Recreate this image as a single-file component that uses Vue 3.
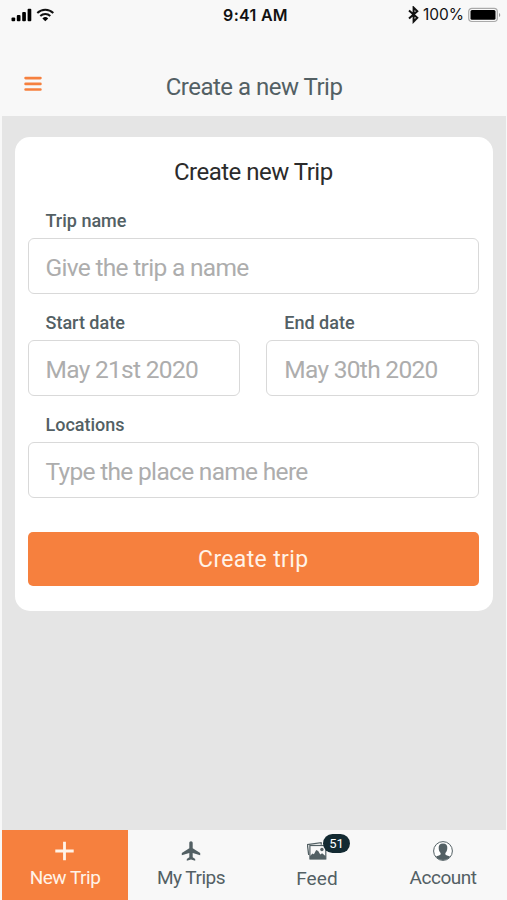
<script setup>
const fields = [
  { id: 'name', label: 'Trip name', hint: 'Give the trip a name', wide: true },
  { id: 'start', label: 'Start date', hint: 'May 21st 2020', wide: false },
  { id: 'end', label: 'End date', hint: 'May 30th 2020', wide: false },
  { id: 'places', label: 'Locations', hint: 'Type the place name here', wide: true },
]
</script>

<template>
  <div class="screen">
    <div class="status">
      <div class="signal">
        <svg width="46" height="16" viewBox="0 0 46 16">
          <rect x="1.5" y="10.5" width="3.7" height="3.8" rx="1" />
          <rect x="6.8" y="8" width="3.7" height="6.3" rx="1" />
          <rect x="12.2" y="5" width="3.7" height="9.3" rx="1" />
          <rect x="17.6" y="1.8" width="3.7" height="12.500" rx="1" />
          <g fill="none" stroke="#111" stroke-width="2">
            <path d="M27.3 6a11.500 11.500 0 0 1 16 0" />
            <path d="M30.3 9.100a7.300 7.300 0 0 1 10 0" />
          </g>
          <path d="M32.400 11.400a4.200 4.200 0 0 1 5.800 0l-2.900 2.900z" />
        </svg>
      </div>
      <span class="clock">9:41 AM</span>
      <div class="power">
        <svg width="11" height="18" viewBox="0 0 11 18">
          <path d="M1 4.600l8.300 7.200L5.600 15.600V1.600l3.700 3.600L1 12.400" fill="none" stroke="#111" stroke-width="2" />
        </svg>
        <span class="percent">100%</span>
        <svg width="33" height="16" viewBox="0 0 33 16">
          <rect x=".7" y="1.300" width="28.600" height="13.200" rx="3.200" fill="#f8f8f8" stroke="#aaa" stroke-width="1.200" />
          <rect x="2.500" y="3.100" width="25" height="9.600" rx="1.500" fill="#000" />
          <path d="M31 5.900a2.200 2.200 0 0 1 0 4z" fill="#999" />
        </svg>
      </div>
    </div>

    <header class="bar">
      <svg class="menu" width="18" height="16" viewBox="0 0 18 16">
        <path d="M1.600 2.100h14.800M1.600 7.900h14.800M1.600 13.500h14.800" stroke="#f6803e" stroke-width="2.700" stroke-linecap="round" />
      </svg>
      <h1>Create a new Trip</h1>
    </header>

    <main class="body">
      <section class="card">
        <h2>Create new Trip</h2>
        <div class="form">
          <div v-for="f in fields" :key="f.id" class="field" :class="{ wide: f.wide }">
            <div class="label">{{ f.label }}</div>
            <div class="input">{{ f.hint }}</div>
          </div>
        </div>
        <button class="submit">Create trip</button>
      </section>
    </main>

    <nav class="tabs">
      <a class="tab active">
        <svg width="20" height="20" viewBox="0 0 20 20">
          <path d="M9.500 .8v18.400M.3 10h18.400" stroke="#fff3e8" stroke-width="2.800" />
        </svg>
        <span>New Trip</span>
      </a>
      <a class="tab">
        <svg width="20" height="20" viewBox="0 0 20 20">
          <path d="M10 .3c-1 0-1.700.8-1.700 1.800v5.200L.8 12v2.200l7.500-2.200v4.300l-2.500 1.800v1.600l4.200-1.100 4.200 1.100v-1.600l-2.500-1.800v-4.300l7.500 2.200V12l-7.500-4.700V2.100c0-1-.7-1.800-1.700-1.800z" fill="#536064" />
        </svg>
        <span>My Trips</span>
      </a>
      <a class="tab feed">
        <div class="stack">
          <svg width="20" height="20" viewBox="0 0 20 20">
            <path d="M1.700 14L.4 3.600 14.100 1.700l.3 2" fill="none" stroke="#536064" stroke-width="1.300" />
            <rect x="2.900" y="4.500" width="15.900" height="13.400" fill="#f8f8f8" stroke="#536064" stroke-width="1.200" />
            <path d="M3 18.300v-3.400l2.500-2.400 1.400.7 2.300-4.300 2 1.200 2.100 3.400 1.800-1.200 3.700 3v3z" fill="#536064" />
            <circle cx="14.900" cy="8.500" r="1.700" fill="#536064" />
          </svg>
          <b class="badge">51</b>
        </div>
        <span>Feed</span>
      </a>
      <a class="tab">
        <svg width="22" height="20" viewBox="0 0 22 20">
          <circle cx="11" cy="10" r="9.400" fill="#fff" stroke="#536064" stroke-width="1" />
          <path d="M11 2.500c-3.100 0-4.600 1.800-4.300 4.500.1 2.400.8 3.900 1.900 4.900.2 1.200-.1 1.900-1.200 2.300-1.800.6-2.700.9-3.400 1.500A9 9 0 0 0 11 19a9 9 0 0 0 7-3.300c-.7-.6-1.600-.9-3.400-1.500-1.100-.4-1.400-1.100-1.200-2.300 1.100-1 1.800-2.500 1.900-4.900.3-2.700-1.200-4.500-4.300-4.500z" fill="#536064" />
        </svg>
        <span>Account</span>
      </a>
    </nav>
  </div>
</template>

<style>
body {
  margin: 0;
  background: #f8f8f8;
}
</style>

<style scoped>
.screen {
  box-sizing: border-box;
  width: 507px;
  height: 900px;
  padding: 0 1px 0 2px;
  display: flex;
  flex-direction: column;
  overflow: hidden;
  background: #f8f8f8;
  font-family: Roboto, sans-serif;
  color: #536064;
  white-space: nowrap;
}
.status {
  display: grid;
  grid-template-columns: 1fr auto 1fr;
  align-items: center;
  height: 29px;
  padding: 0 5px 0 8px;
  color: #111;
}
.signal,
.power {
  display: flex;
  align-items: center;
}
.power {
  justify-content: flex-end;
}
.clock {
  font: 600 16px/20px Inter, sans-serif;
  letter-spacing: 0.3px;
}
.percent {
  margin: 0 4px 0 4px;
  font: 400 15.500px/20px Inter, sans-serif;
}
.bar {
  display: grid;
  grid-template-columns: 18px 1fr 18px;
  align-items: start;
  height: 87px;
  box-sizing: border-box;
  padding: 44px 22px 0;
}
h1,
h2 {
  margin: 0;
  text-align: center;
  font-weight: 400;
  font-size: 24px;
  line-height: 28px;
  letter-spacing: -0.5px;
}
.menu {
  margin-top: 3px;
}
.body {
  flex: 1;
  padding: 20.500px 13.500px 0 12.500px;
  background: #e5e5e5;
}
.card {
  box-sizing: border-box;
  height: 474px;
  padding: 21px 13.500px 0 13px;
  border-radius: 15px;
  background: #fff;
}
h2 {
  color: #2b2b2b;
}
.form {
  display: grid;
  grid-template-columns: 1fr 1fr;
  column-gap: 26px;
  row-gap: 16px;
  margin-top: 22px;
}
.field.wide {
  grid-column: 1 / -1;
}
.label {
  height: 30px;
  padding-left: 18px;
  font-size: 18px;
  font-weight: 500;
  line-height: 26px;
}
.input {
  box-sizing: border-box;
  height: 56px;
  padding-left: 17px;
  border: 1px solid #d9d9d9;
  border-radius: 6px;
  color: #adadad;
  font-size: 24.500px;
  line-height: 57px;
  letter-spacing: -0.690px;
}
.submit {
  display: block;
  box-sizing: border-box;
  width: 100%;
  height: 54px;
  margin-top: 34px;
  padding: 3px 0 0;
  border: 0;
  border-radius: 5px;
  background: #f6803e;
  color: #fff3e8;
  font: 400 23px/50px Roboto, sans-serif;
  letter-spacing: 0.350px;
}
.tabs {
  display: grid;
  grid-template-columns: repeat(4, 1fr);
  height: 70px;
}
.tab {
  display: flex;
  flex-direction: column;
  align-items: center;
  padding-top: 11px;
  font-size: 19px;
  line-height: 24px;
  letter-spacing: -0.500px;
  gap: 5px;
}
.feed {
  gap: 6px;
  letter-spacing: 0.100px;
}
.active {
  background: #f6803e;
  color: #fff3e8;
}
.stack {
  position: relative;
  height: 20px;
}
.tab svg {
  display: block;
}
.badge {
  position: absolute;
  left: 16px;
  top: -7px;
  width: 27px;
  height: 19px;
  border-radius: 10px;
  background: #132a32;
  color: #fff;
  text-align: center;
  font-size: 13px;
  font-weight: 400;
  line-height: 19px;
  letter-spacing: 0;
}
</style>
